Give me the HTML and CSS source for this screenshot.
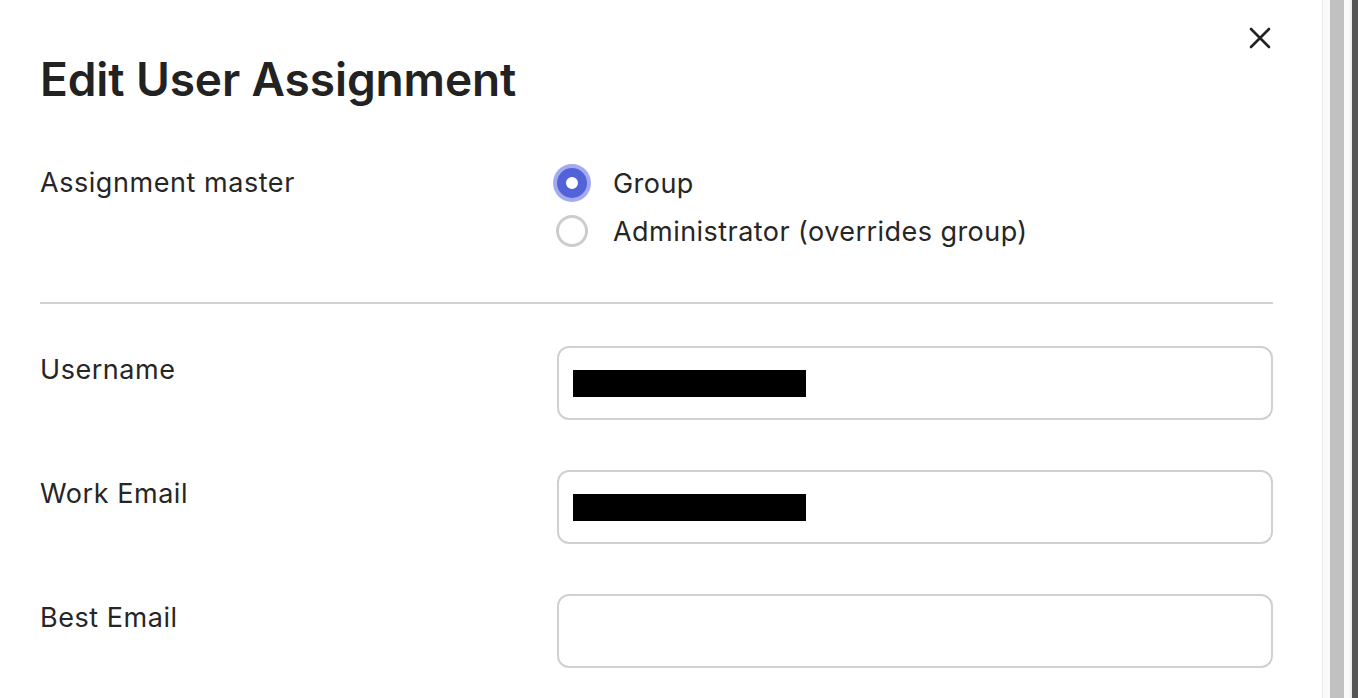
FILE: index.html
```html
<!doctype html>
<html>
    <head>
        <meta charset="utf-8" />
        <title>Edit User Assignment</title>
        <link rel="stylesheet" href="styles.css">
    </head>
    <body>
        <div class="layout">
            <div class="drawer">
                <button class="close-btn" aria-label="Close">
                    <svg width="24" height="24" viewBox="0 0 24 24">
                        <path d="M3 3 L21 21 M21 3 L3 21" stroke="#222" stroke-width="2.6" stroke-linecap="round" fill="none" />
                    </svg>
                </button>

                <h1>Edit User Assignment</h1>

                <div class="field">
                    <div class="field-label">Assignment master</div>
                    <div class="radio-group">
                        <label class="radio-option">
                            <span class="radio checked"></span>
                            Group
                        </label>
                        <label class="radio-option">
                            <span class="radio"></span>
                            Administrator (overrides group)
                        </label>
                    </div>
                </div>

                <hr class="divider" />

                <div class="field input-field">
                    <div class="field-label">Username</div>
                    <div class="text-input"><span class="redacted"></span></div>
                </div>

                <div class="field input-field">
                    <div class="field-label">Work Email</div>
                    <div class="text-input"><span class="redacted"></span></div>
                </div>

                <div class="field input-field">
                    <div class="field-label">Best Email</div>
                    <div class="text-input"></div>
                </div>
            </div>

            <div class="scroll-track">
                <div class="scroll-thumb"></div>
            </div>
            <div class="backdrop-edge"></div>
        </div>
    </body>
</html>
```

FILE: styles.css
```css
body {
    margin: 0;
    font-family: Inter, "Noto Sans", sans-serif;
    color: #262626;
    background: #fff;
    overflow: hidden;
}

.layout {
    display: flex;
    height: 698px;
}

.drawer {
    position: relative;
    flex: 1;
    padding: 53px 49px 0 40px;
    border-right: 1px solid #e8e8e8;
}

.close-btn {
    position: absolute;
    top: 26px;
    right: 50px;
    width: 24px;
    height: 24px;
    padding: 0;
    border: none;
    background: none;
    cursor: pointer;
}

h1 {
    margin: 0 0 53px;
    font-size: 46px;
    line-height: 53px;
    font-weight: 600;
    letter-spacing: -0.1px;
    color: #222;
}

.field {
    display: grid;
    grid-template-columns: 517px 1fr;
}

.field-label {
    font-size: 27px;
    line-height: 48px;
    letter-spacing: 0.55px;
}

.radio-group {
    display: flex;
    flex-direction: column;
}

.radio-option {
    display: flex;
    align-items: center;
    gap: 25px;
    height: 48px;
    font-size: 27px;
    letter-spacing: 0.45px;
}

.radio {
    box-sizing: border-box;
    width: 32px;
    height: 32px;
    border: 3px solid #cccccc;
    border-radius: 50%;
    margin-left: -1px;
}

.radio.checked {
    width: 30px;
    height: 30px;
    margin: 0 1px 0 0;
    border: 9px solid #5262d9;
    background: #fff;
    box-shadow: 0 0 0 4px #a3aaef;
}

.divider {
    margin: 47px 0 42px;
    border: none;
    border-top: 2px solid #d2d2d2;
}

.input-field {
    margin-bottom: 50px;
}

.text-input {
    box-sizing: border-box;
    height: 74px;
    padding: 0 14px;
    border: 2px solid #d0d0d0;
    border-radius: 12px;
    display: flex;
    align-items: center;
}

.redacted {
    display: block;
    width: 233px;
    height: 27px;
    background: #000;
}

.scroll-track {
    width: 29px;
    padding: 0 6px 0 7px;
    box-sizing: border-box;
    background: #fafafa;
    border-right: 2px solid #ececec;
}

.scroll-thumb {
    height: 100%;
    background: #c1c1c1;
}

.backdrop-edge {
    width: 6px;
    background: #555;
}
```
